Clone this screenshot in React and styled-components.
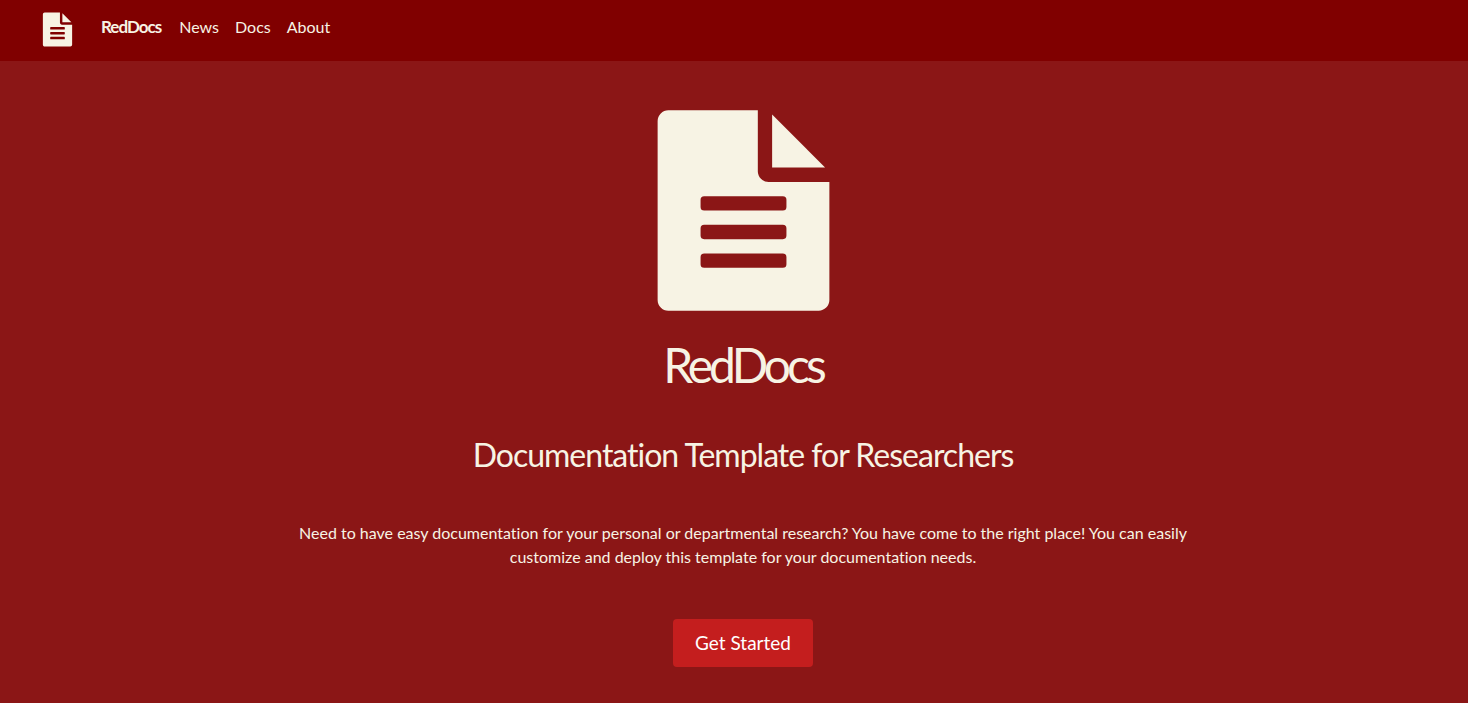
import React from "react";
import styled, { createGlobalStyle } from "styled-components";

const GlobalStyle = createGlobalStyle`
  *, *::before, *::after { box-sizing: border-box; }
  body {
    margin: 0;
    background: #8b1616;
    color: #f7f3e4;
    font-family: Lato, "Liberation Sans", sans-serif;
    font-size: 16px;
    line-height: 24px;
    font-variant-ligatures: none;
  }
`;

const Navbar = styled.nav`
  display: flex;
  align-items: flex-start;
  padding: 10px 38px 12px;
  background: #800000;
`;

const Brand = styled.a`
  display: flex;
  color: inherit;
  text-decoration: none;
  font-size: 17px;
  font-weight: 700;
  letter-spacing: -1px;
  gap: 24px;
`;

const BrandName = styled.span`
  padding-top: 5px;
`;

const NavList = styled.ul`
  display: flex;
  gap: 16px;
  margin: 0 0 0 18px;
  padding: 5px 0 0;
  list-style: none;
`;

const NavLink = styled.a`
  color: inherit;
  text-decoration: none;
`;

const Icon = styled.svg`
  display: block;
  width: ${({ $size }) => $size}px;
  height: ${({ $size }) => $size}px;
  fill: #f7f3e4;
`;

const Hero = styled.main`
  display: flex;
  flex-direction: column;
  align-items: center;
  padding: 35px 16px 36px 34px;
  text-align: center;
`;

const Title = styled.h1`
  margin: 10px 0 0;
  font-size: 48px;
  line-height: 60px;
  font-weight: 400;
  letter-spacing: -4px;
`;

const Subtitle = styled.h2`
  margin: 40px 0 0;
  font-size: 32px;
  line-height: 40px;
  font-weight: 400;
  letter-spacing: -1px;
`;

const Lead = styled.p`
  max-width: 900px;
  margin: 46px 0 0;
`;

const StartButton = styled.button`
  margin-top: 50px;
  padding: 8px 22px;
  border: 0;
  border-radius: 4px;
  background: #c41e1e;
  color: #fff;
  font: inherit;
  font-size: 19px;
  line-height: 32px;
  cursor: pointer;
`;

function DocumentIcon({ size }) {
  return (
    <Icon $size={size} viewBox="0 0 16 16" aria-hidden="true">
      <path
        fillRule="evenodd"
        d="M9 1H2.75a.75.75 0 0 0-.75.75v12.5c0 .414.336.75.75.75h10.5a.75.75 0 0 0 .75-.75V6H9.75A.75.75 0 0 1 9 5.25V1zM5.25 7h5.5a.25.25 0 0 1 .25.25v.5a.25.25 0 0 1-.25.25h-5.5A.25.25 0 0 1 5 7.75v-.5A.25.25 0 0 1 5.25 7zm0 2h5.5a.25.25 0 0 1 .25.25v.5a.25.25 0 0 1-.25.25h-5.5A.25.25 0 0 1 5 9.75v-.5A.25.25 0 0 1 5.25 9zm0 2h5.5a.25.25 0 0 1 .25.25v.5a.25.25 0 0 1-.25.25h-5.5a.25.25 0 0 1-.25-.25v-.5a.25.25 0 0 1 .25-.25z"
      />
      <path d="M10 1.3V5h3.7z" />
    </Icon>
  );
}

const links = ["News", "Docs", "About"];

export default function App() {
  return (
    <>
      <GlobalStyle />
      <Navbar>
        <Brand href="#home">
          <DocumentIcon size={39} />
          <BrandName>RedDocs</BrandName>
        </Brand>
        <NavList>
          {links.map((label) => (
            <li key={label}>
              <NavLink href={`#${label.toLowerCase()}`}>{label}</NavLink>
            </li>
          ))}
        </NavList>
      </Navbar>
      <Hero>
        <DocumentIcon size={229} />
        <Title>RedDocs</Title>
        <Subtitle>Documentation Template for Researchers</Subtitle>
        <Lead>
          Need to have easy documentation for your personal or departmental
          research? You have come to the right place! You can easily customize
          and deploy this template for your documentation needs.
        </Lead>
        <StartButton type="button">Get Started</StartButton>
      </Hero>
    </>
  );
}
